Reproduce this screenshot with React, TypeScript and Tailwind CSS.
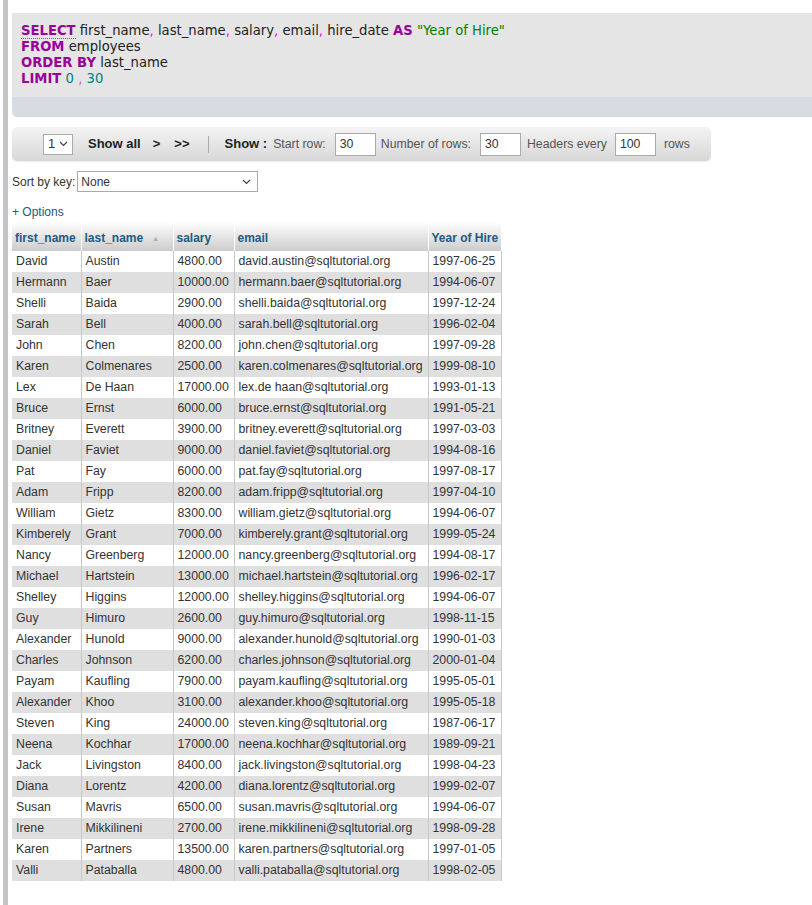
import React from "react";

const rows: [string, string, string, string, string][] = [
  ["David", "Austin", "4800.00", "david.austin@sqltutorial.org", "1997-06-25"],
  ["Hermann", "Baer", "10000.00", "hermann.baer@sqltutorial.org", "1994-06-07"],
  ["Shelli", "Baida", "2900.00", "shelli.baida@sqltutorial.org", "1997-12-24"],
  ["Sarah", "Bell", "4000.00", "sarah.bell@sqltutorial.org", "1996-02-04"],
  ["John", "Chen", "8200.00", "john.chen@sqltutorial.org", "1997-09-28"],
  ["Karen", "Colmenares", "2500.00", "karen.colmenares@sqltutorial.org", "1999-08-10"],
  ["Lex", "De Haan", "17000.00", "lex.de haan@sqltutorial.org", "1993-01-13"],
  ["Bruce", "Ernst", "6000.00", "bruce.ernst@sqltutorial.org", "1991-05-21"],
  ["Britney", "Everett", "3900.00", "britney.everett@sqltutorial.org", "1997-03-03"],
  ["Daniel", "Faviet", "9000.00", "daniel.faviet@sqltutorial.org", "1994-08-16"],
  ["Pat", "Fay", "6000.00", "pat.fay@sqltutorial.org", "1997-08-17"],
  ["Adam", "Fripp", "8200.00", "adam.fripp@sqltutorial.org", "1997-04-10"],
  ["William", "Gietz", "8300.00", "william.gietz@sqltutorial.org", "1994-06-07"],
  ["Kimberely", "Grant", "7000.00", "kimberely.grant@sqltutorial.org", "1999-05-24"],
  ["Nancy", "Greenberg", "12000.00", "nancy.greenberg@sqltutorial.org", "1994-08-17"],
  ["Michael", "Hartstein", "13000.00", "michael.hartstein@sqltutorial.org", "1996-02-17"],
  ["Shelley", "Higgins", "12000.00", "shelley.higgins@sqltutorial.org", "1994-06-07"],
  ["Guy", "Himuro", "2600.00", "guy.himuro@sqltutorial.org", "1998-11-15"],
  ["Alexander", "Hunold", "9000.00", "alexander.hunold@sqltutorial.org", "1990-01-03"],
  ["Charles", "Johnson", "6200.00", "charles.johnson@sqltutorial.org", "2000-01-04"],
  ["Payam", "Kaufling", "7900.00", "payam.kaufling@sqltutorial.org", "1995-05-01"],
  ["Alexander", "Khoo", "3100.00", "alexander.khoo@sqltutorial.org", "1995-05-18"],
  ["Steven", "King", "24000.00", "steven.king@sqltutorial.org", "1987-06-17"],
  ["Neena", "Kochhar", "17000.00", "neena.kochhar@sqltutorial.org", "1989-09-21"],
  ["Jack", "Livingston", "8400.00", "jack.livingston@sqltutorial.org", "1998-04-23"],
  ["Diana", "Lorentz", "4200.00", "diana.lorentz@sqltutorial.org", "1999-02-07"],
  ["Susan", "Mavris", "6500.00", "susan.mavris@sqltutorial.org", "1994-06-07"],
  ["Irene", "Mikkilineni", "2700.00", "irene.mikkilineni@sqltutorial.org", "1998-09-28"],
  ["Karen", "Partners", "13500.00", "karen.partners@sqltutorial.org", "1997-01-05"],
  ["Valli", "Pataballa", "4800.00", "valli.pataballa@sqltutorial.org", "1998-02-05"],
];

const Kw = ({ children }: { children: React.ReactNode }) => (
  <span className="font-bold text-[#990099]">{children}</span>
);
const Comma = () => <span className="text-[#ff00ff]">,</span>;

function Chevron() {
  return (
    <svg width="9" height="6" viewBox="0 0 9 6" className="text-[#444]">
      <path d="M1 1l3.5 3.5L8 1" fill="none" stroke="currentColor" strokeWidth="1.2" />
    </svg>
  );
}

function NumBox({ value }: { value: string }) {
  return (
    <div className="flex h-[23px] w-[41px] items-center border border-[#aaa] bg-white px-[4px] text-[12.3px] text-[#333]">
      {value}
    </div>
  );
}

export default function App() {
  return (
    <div className="flex min-h-[905px] bg-white font-['Liberation_Sans',Arial,sans-serif] text-[#333]">
      {/* left frame edge */}
      <div className="ml-[3px] w-[5px] shrink-0 bg-[#c4c4c4]" />

      <div className="ml-[4px] flex min-w-0 flex-1 flex-col">
        {/* SQL query box */}
        <div className="mt-[13px] overflow-hidden rounded-bl-[5px] bg-[#e5e5e5]">
          <div className="px-[9px] py-[10px] font-['DejaVu_Sans',Verdana,sans-serif] text-[13.2px] leading-[16px] text-[#222]">
            <div className="whitespace-nowrap">
              <span className="border-b border-dotted border-[#666] font-bold text-[#990099]">SELECT</span> first_name
              <Comma /> last_name
              <Comma /> salary
              <Comma /> email
              <Comma /> hire_date <Kw>AS</Kw> <span className="text-[#008000]">"Year of Hire"</span>
            </div>
            <div>
              <Kw>FROM</Kw> employees
            </div>
            <div>
              <Kw>ORDER BY</Kw> last_name
            </div>
            <div>
              <Kw>LIMIT</Kw> <span className="text-[#008080]">0</span> <span className="text-[#cc55cc]">,</span>{" "}
              <span className="text-[#008080]">30</span>
            </div>
          </div>
          <div className="h-[20px] bg-[#d6dce2]" />
        </div>

        {/* navigation bar */}
        <div className="mt-[10px] flex h-[34px] w-[699px] items-center rounded-[5px] bg-gradient-to-b from-[#f4f4f4] to-[#d7d7d7] pl-[31px] text-[13px] shadow-[0_1px_1px_rgba(0,0,0,0.08)]">
          <div className="flex h-[21px] w-[30px] items-center justify-between border border-[#aaa] bg-white pl-[4px] pr-[4px] text-[13px] text-[#333]">
            <span>1</span>
            <Chevron />
          </div>
          <span className="ml-[15px] font-bold text-[#222]">Show all</span>
          <span className="ml-[12px] font-bold text-[#222]">&gt;</span>
          <span className="ml-[14px] font-bold text-[#222]">&gt;&gt;</span>
          <div className="ml-[18px] h-[17px] w-px bg-[#aaa]" />
          <span className="ml-[16px] font-bold text-[#222]">Show :</span>
          <span className="ml-[6px] text-[12.3px] text-[#555]">Start row:</span>
          <div className="ml-[9px]">
            <NumBox value="30" />
          </div>
          <span className="ml-[5px] text-[12.3px] text-[#555]">Number of rows:</span>
          <div className="ml-[9px]">
            <NumBox value="30" />
          </div>
          <span className="ml-[6px] text-[12.3px] text-[#555]">Headers every</span>
          <div className="ml-[8px]">
            <NumBox value="100" />
          </div>
          <span className="ml-[8px] text-[12.3px] text-[#555]">rows</span>
        </div>

        {/* sort by key */}
        <div className="mt-[10px] flex items-center text-[12px]">
          <span className="text-[#333]">Sort by key:</span>
          <div className="ml-[2px] flex h-[21px] w-[181px] items-center justify-between border border-[#aaa] bg-white pl-[3px] pr-[6px] text-[12px] text-[#333]">
            <span>None</span>
            <Chevron />
          </div>
        </div>

        <div className="mt-[13px] text-[12px] leading-[15px] text-[#235a81]">+ Options</div>

        {/* results table */}
        <table className="mt-[2px] w-[489px] table-fixed border-collapse text-[12.3px]">
          <colgroup>
            <col className="w-[69px]" />
            <col className="w-[92px]" />
            <col className="w-[61px]" />
            <col className="w-[194px]" />
            <col className="w-[73px]" />
          </colgroup>
          <thead>
            <tr className="h-[29px] bg-gradient-to-b from-[#ffffff] to-[#cccccc] text-left">
              {["first_name", "last_name", "salary", "email", "Year of Hire"].map((h) => (
                <th
                  key={h}
                  className="whitespace-nowrap border-x border-white pl-[3px] pr-0 pt-[3px] align-middle text-[12px] font-bold text-[#235a81] first:border-l-0"
                >
                  {h}
                  {h === "last_name" && (
                    <span className="ml-[9px] inline-block align-middle text-[7px] leading-none text-[#aaa]">▲</span>
                  )}
                </th>
              ))}
            </tr>
          </thead>
          <tbody>
            {rows.map((r, i) => (
              <tr key={i} className={i % 2 === 0 ? "h-[21px] bg-white" : "h-[21px] bg-[#dfdfdf]"}>
                {r.map((c, j) => (
                  <td
                    key={j}
                    className="whitespace-nowrap border-x border-[#c8c8c8] px-[4px] py-0 leading-[21px] text-[#333] first:border-l-0"
                  >
                    {c}
                  </td>
                ))}
              </tr>
            ))}
          </tbody>
        </table>
      </div>
    </div>
  );
}
